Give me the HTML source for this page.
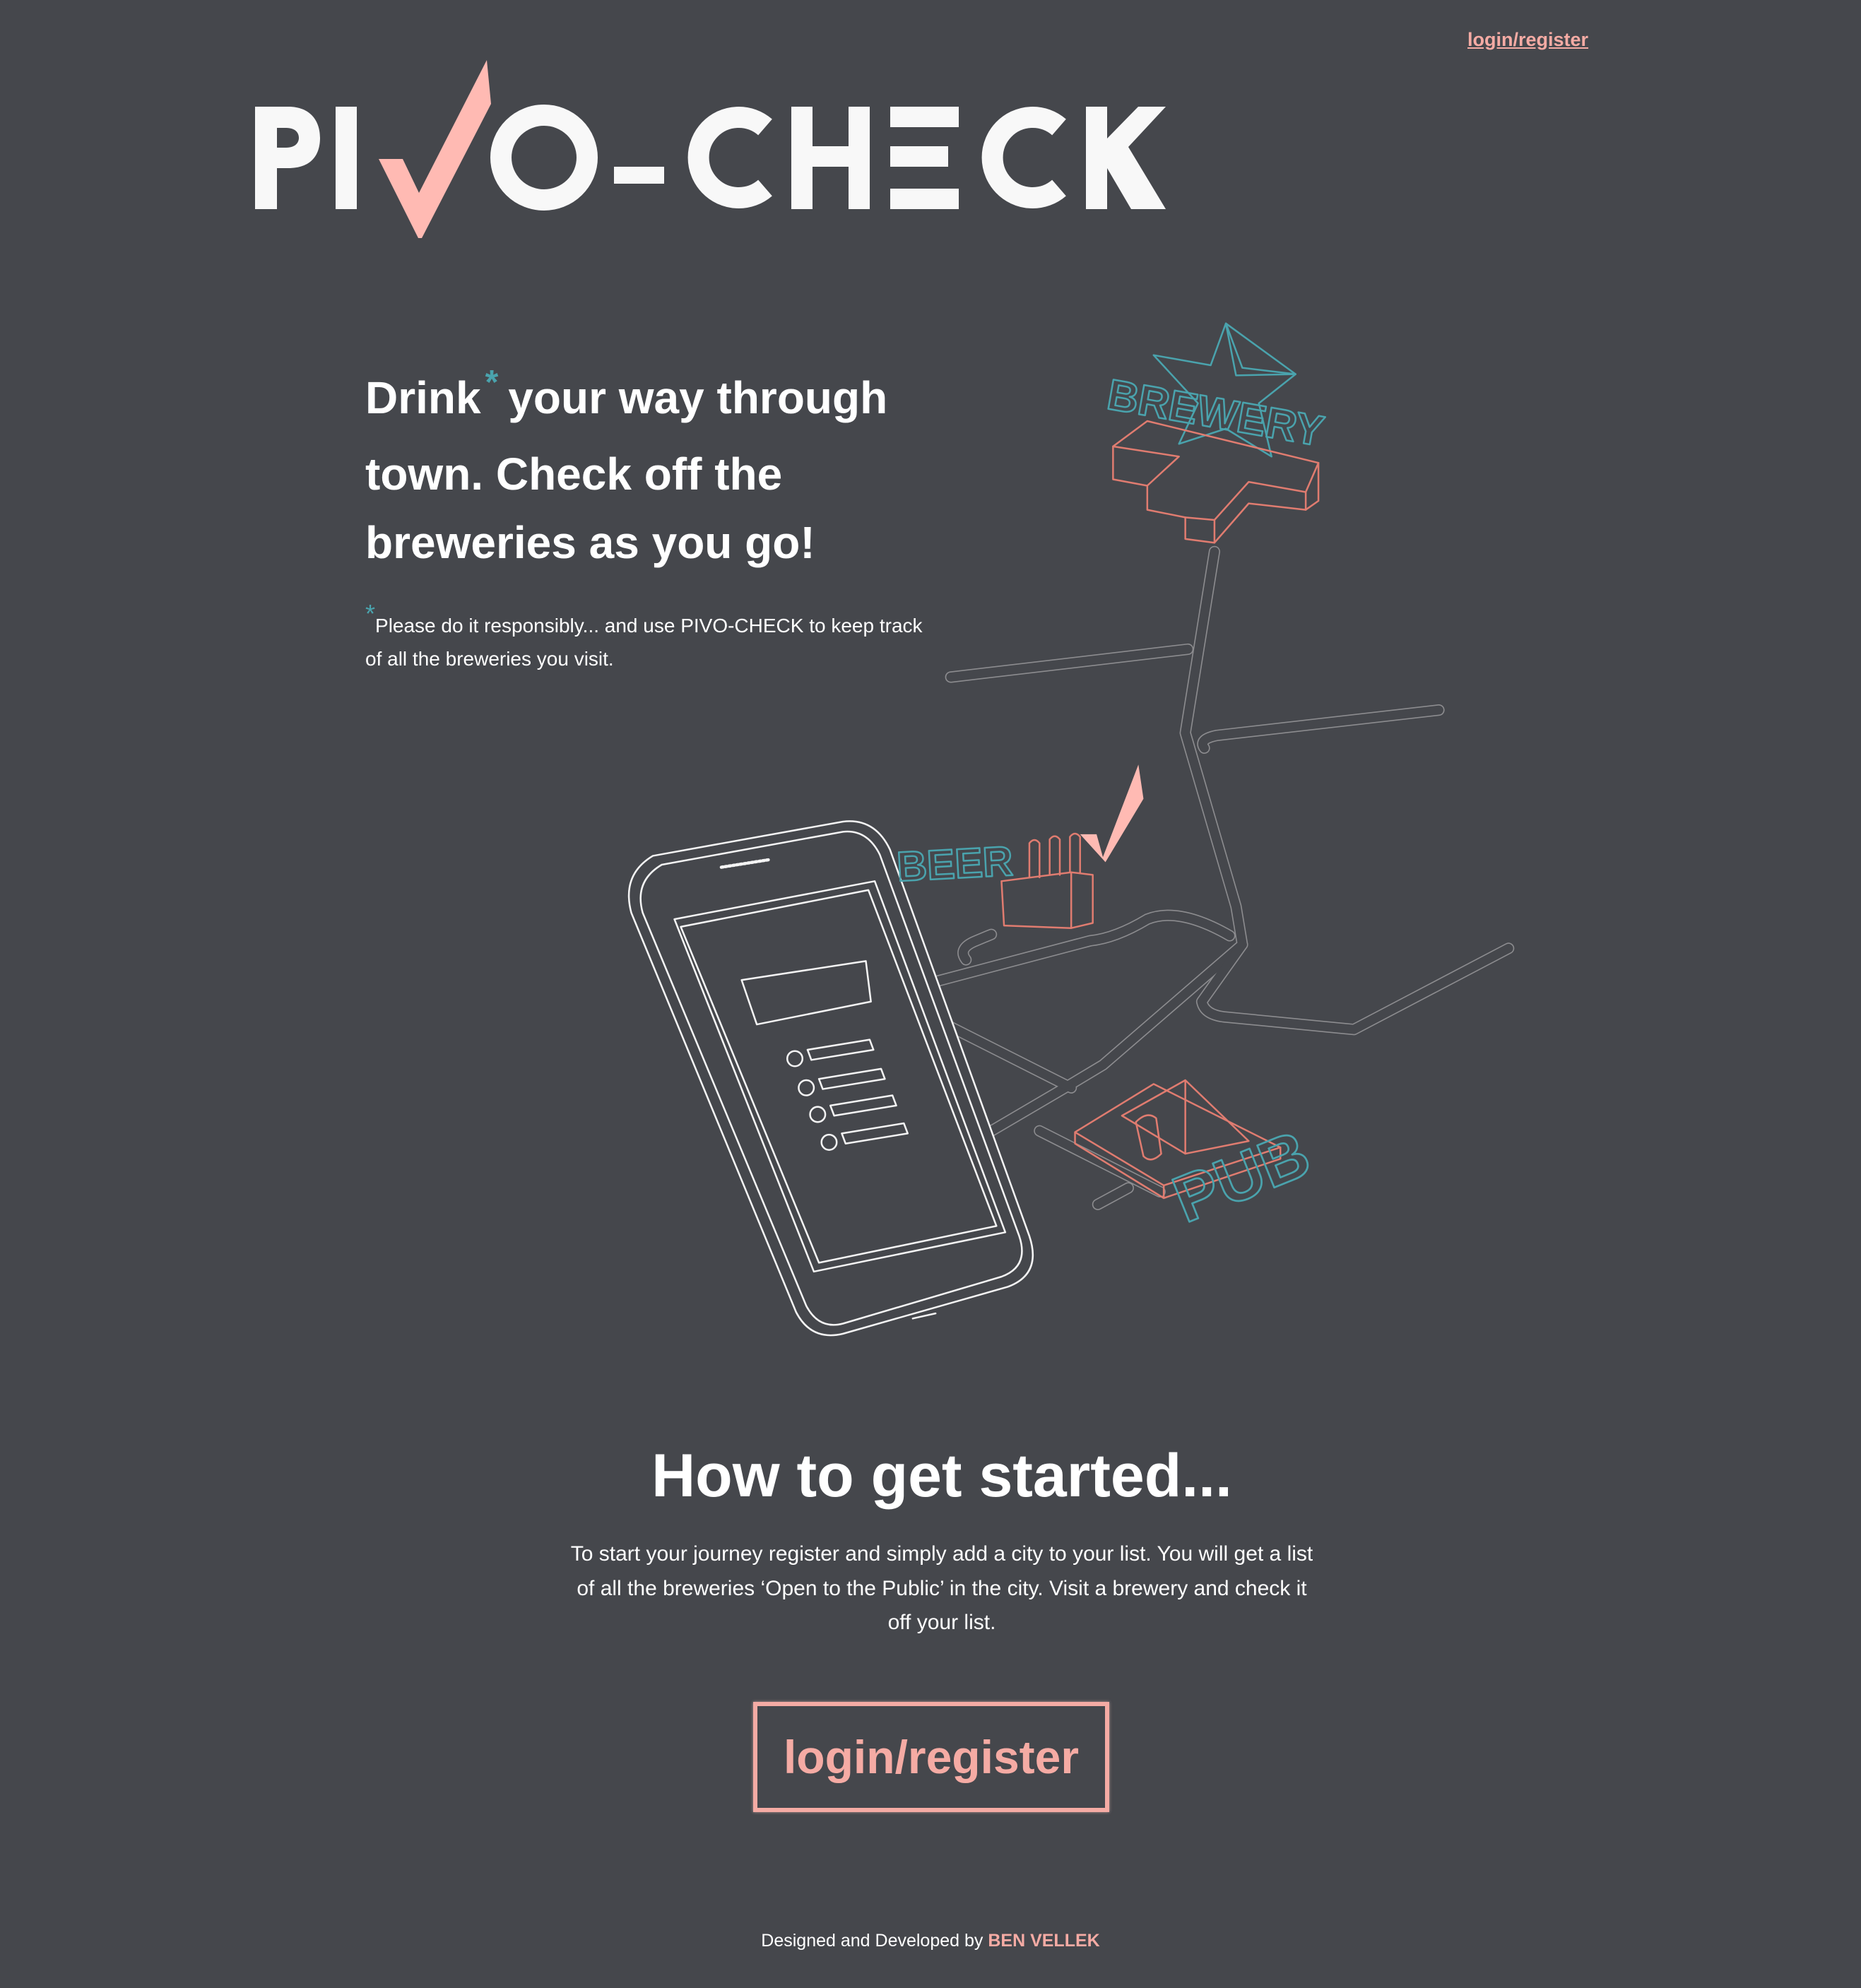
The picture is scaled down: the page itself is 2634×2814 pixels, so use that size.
<!DOCTYPE html>
<html><head><meta charset="utf-8"><style>
html,body{margin:0;padding:0}
body{width:2634px;height:2814px;background:#45474c;position:relative;overflow:hidden;font-family:"Liberation Sans",sans-serif;color:#fff}
.a{position:absolute;white-space:nowrap}
.h{font-weight:bold;font-size:64px;left:517px}
.s{font-size:28px;left:517px}
.teal{color:#4aa3ad}
</style></head><body>
<div class="a" style="left:2077px;top:41px;font-size:27px;font-weight:bold;color:#f5aba4;text-decoration:underline">login/register</div>

<svg class="a" style="left:0;top:0" width="2634" height="2814" viewBox="0 0 2634 2814">
<g fill="#f8f8f8">
<path fill-rule="evenodd" d="M361,151 H408 C440,151 453,172 453,195 C453,220 440,238 408,238 H392 V296 H361 Z M392,181 H405 C418,181 423,188 423,195 C423,202 418,209 405,209 H392 Z"/>
<rect x="475" y="151" width="30" height="145"/>
<ellipse cx="770" cy="223" rx="61" ry="60" fill="none" stroke="#f8f8f8" stroke-width="30"/>
<rect x="869" y="236" width="71" height="24"/>
<path d="M1083,180 A57 57 0 1 0 1083,266" fill="none" stroke="#f8f8f8" stroke-width="30"/>
<rect x="1120" y="151" width="30" height="145"/>
<rect x="1201" y="151" width="30" height="145"/>
<rect x="1150" y="207" width="51" height="29"/>
<rect x="1260" y="151" width="97" height="29"/>
<rect x="1260" y="207" width="82" height="29"/>
<rect x="1260" y="267" width="97" height="29"/>
<path d="M1499,180 A57 57 0 1 0 1499,266" fill="none" stroke="#f8f8f8" stroke-width="30"/>
<rect x="1537" y="151" width="30" height="145"/>
<polygon points="1567,250 1567,196 1611,151 1650,151 1597,208 1650,296 1601,296 1567,238"/>
</g>
<polygon fill="#ffbab3" points="536,225 570,225 593,273 689,85 695,147 597,337 592,337"/>
</svg>

<div class="a h" style="top:526px">Drink<span class="teal" style="font-size:48px;position:relative;top:-28px;margin:0 14px 0 6px">*</span>your way through</div>
<div class="a h" style="top:634px">town. Check off the</div>
<div class="a h" style="top:731px">breweries as you go!</div>
<div class="a s" style="top:862px"><span class="teal" style="font-size:36px;position:relative;top:-14px">*</span>Please do it responsibly... and use PIVO-CHECK to keep track</div>
<div class="a s" style="top:917px">of all the breweries you visit.</div>

<svg class="a" style="left:0;top:0" width="2634" height="2814" viewBox="0 0 1468 1568">
<g fill="none" stroke-linejoin="round" stroke-linecap="round">
<g stroke="#8c8c8f" stroke-width="9">
<path d="M958,435 L935,578 L975,715 L980,745 L870,840 L840,858 L760,905"/>
<path d="M750,534 L937,512"/>
<path d="M950,590 Q945,583 960,580 L1135,560"/>
<path d="M980,745 L948,790 Q950,800 965,802 L1068,812 L1190,748"/>
<path d="M735,775 L860,742 Q880,740 905,725 Q930,715 970,738"/>
<path d="M762,757 Q755,748 770,742 L782,737"/>
<path d="M740,805 L845,858"/>
<path d="M820,892 L915,940"/>
<path d="M866,950 L890,937"/>
</g>
<g stroke="#45474c" stroke-width="7.2">
<path d="M958,435 L935,578 L975,715 L980,745 L870,840 L840,858 L760,905"/>
<path d="M750,534 L937,512"/>
<path d="M950,590 Q945,583 960,580 L1135,560"/>
<path d="M980,745 L948,790 Q950,800 965,802 L1068,812 L1190,748"/>
<path d="M735,775 L860,742 Q880,740 905,725 Q930,715 970,738"/>
<path d="M762,757 Q755,748 770,742 L782,737"/>
<path d="M740,805 L845,858"/>
<path d="M820,892 L915,940"/>
<path d="M866,950 L890,937"/>
</g>
<g stroke="#f4f4f4" stroke-width="1.4">
<path fill="#45474c" d="M515,675 L665,648 Q690,645 702,670 L812,975 Q822,1005 795,1015 L665,1052 Q640,1058 628,1035 L498,720 Q490,690 515,675 Z"/>
<path d="M522,682 L665,656 Q684,654 694,674 L804,975 Q812,999 790,1007 L665,1044 Q646,1049 636,1030 L507,720 Q500,695 522,682 Z"/>
<polygon points="532,725 690,695 793,972 642,1003"/>
<polygon points="537,731 685,702 786,967 646,996"/>
<path d="M569,684 L607,678" stroke-dasharray="1.5 1.5" stroke-width="2.5"/>
<polygon points="585,773 683,758 687,790 597,808"/>
<circle cx="627" cy="835" r="6"/><circle cx="636" cy="858" r="6"/><circle cx="645" cy="879" r="6"/><circle cx="654" cy="901" r="6"/>
<polygon points="637,828 686,820 689,828 640,836"/>
<polygon points="646,851 695,843 698,851 649,859"/>
<polygon points="655,872 704,864 707,872 658,880"/>
<polygon points="664,894 713,886 716,894 667,902"/>
<path d="M720,1040 L738,1036"/>
</g>
<g stroke="#4aa3ad" stroke-width="1.4">
<polygon points="967,255 980,290 1022,295 993,318 1003,360 967,338 930,350 945,318 910,280 955,288"/>
<polygon points="967,255 975,296 1022,295"/>
</g>
<text x="872" y="322" transform="rotate(10 872 322)" font-family="Liberation Sans,sans-serif" font-weight="bold" font-size="34" fill="none" stroke="#4aa3ad" stroke-width="1.4">BREWERY</text>
<g stroke="#e07c70" stroke-width="1.4">
<path d="M878,352 L905,332 L1040,365 L1040,395 L1030,402 L985,397 L958,428 L935,425 L935,408 L905,402 L905,383 L878,378 Z"/>
<path d="M878,352 L930,360 L905,383 M935,408 L958,410 L985,380 L1030,388 L1040,365 M958,410 L958,428 M1030,388 L1030,402"/>
</g>
<text x="708" y="695" transform="rotate(-3 708 695)" font-family="Liberation Sans,sans-serif" font-weight="bold" font-size="33" fill="none" stroke="#4aa3ad" stroke-width="1.4">BEER</text>
<g stroke="#e07c70" stroke-width="1.4">
<path d="M790,695 L845,688 L862,690 L862,728 L845,732 L792,730 Z M845,688 L845,732 M790,695 L792,730"/>
<path d="M812,692 L812,665 Q816,660 820,665 L820,692 M828,690 L828,662 Q832,657 836,662 L836,690 M844,688 L844,660 Q848,655 852,660 L852,688"/>
</g>
<polygon fill="#ffbab3" points="852,658 865,658 870,676 898,603 902,630 872,680"/>
<g stroke="#e07c70" stroke-width="1.4">
<path d="M848,893 L910,855 L1010,905 L918,935 Z M848,893 L848,902 L918,945 L918,935 M918,945 L1010,914 L1010,905"/>
<path d="M885,880 L935,852 L985,900 L935,910 Z M935,852 L935,910"/>
<path d="M896,885 L902,912 Q908,918 916,910 L912,882 Q905,876 896,885 Z"/>
</g>
<text x="935" y="965" transform="rotate(-22 935 965)" font-family="Liberation Sans,sans-serif" font-weight="bold" font-size="52" fill="none" stroke="#4aa3ad" stroke-width="1.5">PUB</text>
</g>
</svg>

<div class="a" style="left:0;width:2666px;text-align:center;top:2040px;font-size:86px;font-weight:bold">How to get started...</div>
<div class="a" style="left:633px;width:1400px;text-align:center;top:2176px;font-size:30px;line-height:48.5px">To start your journey register and simply add a city to your list. You will get a list<br>of all the breweries ‘Open to the Public’ in the city. Visit a brewery and check it<br>off your list.</div>
<div class="a" style="left:1066px;top:2409px;width:492px;height:144px;border:6px solid #f5aba4;box-shadow:0 0 4px rgba(255,200,195,.6);display:flex;align-items:center;justify-content:center;font-size:66px;font-weight:bold;color:#f5aba4">login/register</div>
<div class="a" style="left:0;width:2634px;text-align:center;top:2733px;font-size:25px">Designed and Developed by <b style="color:#f5aba4">BEN VELLEK</b></div>
</body></html>
